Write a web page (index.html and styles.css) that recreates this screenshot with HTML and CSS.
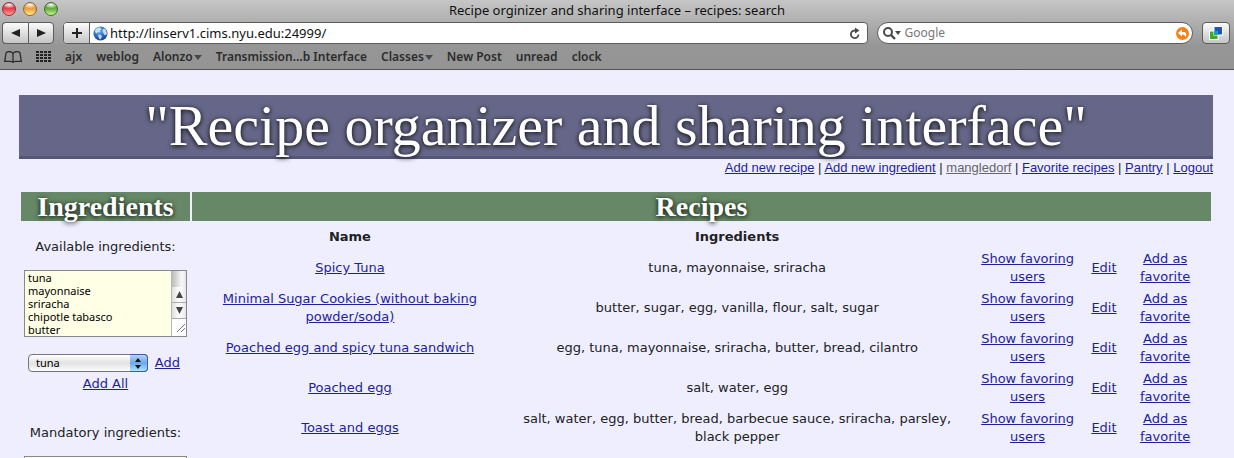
FILE: index.html
```html
<!DOCTYPE html>
<html lang="en">
<head>
<meta charset="utf-8">
<title>Recipe orginizer and sharing interface – recipes: search</title>
<link rel="stylesheet" href="styles.css">
</head>
<body>
<div class="browser">
  <header class="chrome">
    <div class="titlebar">
      <div class="lights">
        <button class="light light-close" type="button" aria-label="Close"></button>
        <button class="light light-min" type="button" aria-label="Minimize"></button>
        <button class="light light-zoom" type="button" aria-label="Zoom"></button>
      </div>
      <div class="window-title">Recipe orginizer and sharing interface – recipes: search</div>
    </div>
    <div class="toolbar">
      <div class="history">
        <button class="tool" type="button" aria-label="Back"><svg width="10" height="8" viewBox="0 0 10 8"><path d="M9 0v8L0 4z" fill="#222"/></svg></button>
        <button class="tool" type="button" aria-label="Forward"><svg width="10" height="8" viewBox="0 0 10 8"><path d="M1 0v8l9-4z" fill="#222"/></svg></button>
      </div>
      <div class="address">
        <button class="tool tool-add" type="button" aria-label="Add bookmark"><svg width="12" height="12" viewBox="0 0 12 12"><path d="M6 1v10M1 6h10" stroke="#222" stroke-width="2"/></svg></button>
        <svg class="globe" width="15" height="15" viewBox="0 0 15 15">
          <defs><radialGradient id="globe" cx=".4" cy=".3" r=".7"><stop offset="0" stop-color="#7db8ee"/><stop offset=".6" stop-color="#2a6dbd"/><stop offset="1" stop-color="#17418a"/></radialGradient></defs>
          <circle cx="7.5" cy="7.5" r="7" fill="url(#globe)"/>
          <path d="M2 4.5C3 2 5.500 1 7 1.500L8.500 3 7 4.500 6.500 6.500 5 6 3.500 7.500 2 6zM5 8.500l3 .5 1 1.500-1.500 3L6 12.500zM10 3l2-.5 1.500 3L14 8l-2 1.500-1.500-2L9.500 5z" fill="#d9ecf8" opacity=".85"/>
        </svg>
        <input class="url" type="text" value="http://linserv1.cims.nyu.edu:24999/" aria-label="Address">
        <button class="plain reload" type="button" aria-label="Reload"><svg width="12" height="13" viewBox="0 0 12 13"><path d="M7 3.500H5.500a3.800 3.800 0 1 0 4 4" fill="none" stroke="#4a4a4a" stroke-width="1.800"/><path d="M6 .5l4.500 3-4.500 3z" fill="#4a4a4a"/></svg></button>
      </div>
      <div class="search">
        <svg width="18" height="13" viewBox="0 0 18 13"><circle cx="5" cy="5" r="4" fill="none" stroke="#4a4a4a" stroke-width="2"/><path d="M8 8l4 4" stroke="#4a4a4a" stroke-width="2.400"/><path d="M12 4h6l-3 4z" fill="#4a4a4a"/></svg>
        <input class="query" type="text" placeholder="Google" aria-label="Search">
        <button class="plain" type="button" aria-label="SnapBack"><svg width="13" height="13" viewBox="0 0 13 13"><circle cx="6.500" cy="6.500" r="6.500" fill="#f98015"/><path d="M2 6l4-3.500V5h1.500C10 5 11 7 9.500 10.500 9.500 8.500 8.500 7.500 6 7.500V9.500z" fill="#fff"/></svg></button>
      </div>
      <button class="tool tool-extra" type="button" aria-label="Window sync"><svg width="14" height="14" viewBox="0 0 14 14"><rect x=".5" y="5" width="8.500" height="8.500" fill="#3faa28" stroke="#fff"/><rect x="5" y=".5" width="8.500" height="8.500" fill="#1f55b5" stroke="#fff"/><rect x="5" y="5" width="4" height="4" fill="#19a3b0"/></svg></button>
    </div>
    <nav class="bookmarks" aria-label="Bookmarks">
      <button class="plain" type="button" aria-label="Show all bookmarks"><svg width="18" height="12" viewBox="0 0 18 12"><path d="M9 10.500V2.500C7.500 0 3.500 0 2 2L.7 10.300H6.500C8 10.300 8.500 10.700 9 11.500c.5-.8 1-1.200 2.500-1.200h5.800L16 2C14.500 0 10.500 0 9 2.500" fill="none" stroke="#2b2b2b" stroke-width="1.300"/></svg></button>
      <button class="plain" type="button" aria-label="Top sites"><svg width="15" height="11" viewBox="0 0 15 11"><path d="M0 1h15M0 4h15M0 7h15M0 10h15" stroke="#222" stroke-width="2" stroke-dasharray="3 1"/></svg></button>
      <a href="#">ajx</a>
      <a href="#">weblog</a>
      <a href="#">Alonzo<span class="caret"></span></a>
      <a href="#">Transmission…b Interface</a>
      <a href="#">Classes<span class="caret"></span></a>
      <a href="#">New Post</a>
      <a href="#">unread</a>
      <a href="#">clock</a>
    </nav>
  </header>

  <div class="page">
    <h1 class="banner">"Recipe organizer and sharing interface"</h1>
    <nav class="site-links" aria-label="Site">
      <a href="#">Add new recipe</a> | <a href="#">Add new ingredient</a> | <a class="user" href="#">mangledorf</a> | <a href="#">Favorite recipes</a> | <a href="#">Pantry</a> | <a href="#">Logout</a>
    </nav>

    <div class="columns">
      <aside class="filters">
        <h2 class="section-title">Ingredients</h2>
        <div class="filter">
          <label for="available">Available ingredients:</label>
          <div class="listbox">
            <textarea id="available" rows="5">tuna
mayonnaise
sriracha
chipotle tabasco
butter</textarea>
            <div class="scrollbar" aria-hidden="true">
              <span class="track"></span>
              <span class="step"><svg width="7" height="7" viewBox="0 0 7 7"><path d="M0 7h7L3.500 0z" fill="#444"/></svg></span>
              <span class="step"><svg width="7" height="7" viewBox="0 0 7 7"><path d="M0 0h7L3.500 7z" fill="#444"/></svg></span>
              <span class="grip"><svg width="9" height="9" viewBox="0 0 9 9"><path d="M1 9l8-8M5 9l4-4" stroke="#777"/></svg></span>
            </div>
          </div>
          <div class="picker">
            <span class="popup">
              <select aria-label="Ingredient"><option>tuna</option></select>
              <span class="popup-arrows" aria-hidden="true"><svg width="6" height="11" viewBox="0 0 6 11"><path d="M0 4h6L3 0zM0 7h6l-3 4z" fill="#111"/></svg></span>
            </span>
            <a href="#">Add</a>
          </div>
          <a href="#">Add All</a>
        </div>
        <div class="filter">
          <label for="mandatory">Mandatory ingredients:</label>
          <div class="listbox"><textarea id="mandatory" rows="5"></textarea></div>
        </div>
      </aside>

      <main class="recipes">
        <h2 class="section-title">Recipes</h2>
        <table class="recipe-table">
          <colgroup><col class="col-name"><col class="col-ingredients"><col class="col-users"><col class="col-edit"><col class="col-favorite"></colgroup>
          <thead>
            <tr><th>Name</th><th>Ingredients</th><td></td><td></td><td></td></tr>
          </thead>
          <tbody>
            <tr><td><a href="#">Spicy Tuna</a></td><td>tuna, mayonnaise, sriracha</td><td><a href="#">Show favoring users</a></td><td><a href="#">Edit</a></td><td><a href="#">Add as favorite</a></td></tr>
            <tr><td><a href="#">Minimal Sugar Cookies (without baking powder/soda)</a></td><td>butter, sugar, egg, vanilla, flour, salt, sugar</td><td><a href="#">Show favoring users</a></td><td><a href="#">Edit</a></td><td><a href="#">Add as favorite</a></td></tr>
            <tr><td><a href="#">Poached egg and spicy tuna sandwich</a></td><td>egg, tuna, mayonnaise, sriracha, butter, bread, cilantro</td><td><a href="#">Show favoring users</a></td><td><a href="#">Edit</a></td><td><a href="#">Add as favorite</a></td></tr>
            <tr><td><a href="#">Poached egg</a></td><td>salt, water, egg</td><td><a href="#">Show favoring users</a></td><td><a href="#">Edit</a></td><td><a href="#">Add as favorite</a></td></tr>
            <tr><td><a href="#">Toast and eggs</a></td><td>salt, water, egg, butter, bread, barbecue sauce, sriracha, parsley, black pepper</td><td><a href="#">Show favoring users</a></td><td><a href="#">Edit</a></td><td><a href="#">Add as favorite</a></td></tr>
          </tbody>
        </table>
      </main>
    </div>
  </div>
</div>
</body>
</html>
```

FILE: styles.css
```css
* { box-sizing: border-box; }

body {
  margin: 0;
  background: #eeeeff;
  color: #222;
  font: 13px/18px "DejaVu Sans", Verdana, sans-serif;
}

button, input, select, textarea { margin: 0; font: inherit; color: inherit; }
svg { display: block; flex: none; }

.browser {
  display: flex;
  flex-direction: column;
  height: 100vh;
}

/* Window chrome */
.chrome {
  flex: none;
  border-bottom: 1px solid #515151;
  background: linear-gradient(#c6c6c6, #969696 46px, #949494);
  color: #111;
  font: 13px/18px "Noto Sans", "Lucida Grande", sans-serif;
}

.titlebar {
  display: grid;
  grid-template-columns: 1fr auto 1fr;
  align-items: center;
  height: 20px;
}

.lights { display: flex; gap: 7px; padding: 0 0 2px 2px; }

.light {
  width: 14px;
  height: 14px;
  padding: 0;
  border: 1px solid #4a4a4a;
  border-radius: 50%;
}
.light-close { border-color: #8a3030; background: radial-gradient(ellipse 60% 30% at 50% 15%, #fff, transparent), linear-gradient(#c8303a, #e8424a 50%, #ffa0a0); }
.light-min { border-color: #966428; background: radial-gradient(ellipse 60% 30% at 50% 15%, #fff, transparent), linear-gradient(#d88a30, #f0a040 50%, #ffee90); }
.light-zoom { border-color: #3c7028; background: radial-gradient(ellipse 60% 30% at 50% 15%, #fff, transparent), linear-gradient(#4a9030, #68b040 50%, #c8f490); }

.toolbar {
  display: flex;
  align-items: center;
  gap: 9px;
  padding: 2px 4px 2px 2px;
}

.history { display: flex; }

.tool {
  display: flex;
  align-items: center;
  justify-content: center;
  width: 26px;
  height: 22px;
  padding: 0;
  border: 1px solid #5c5c5c;
  border-radius: 4px;
  background: linear-gradient(#fbfbfb, #c4c4c4);
}
.history .tool:first-child { border-right: 0; border-radius: 4px 0 0 4px; }
.history .tool:last-child { border-radius: 0 4px 4px 0; }

.address, .search {
  display: flex;
  align-items: center;
  height: 22px;
  min-width: 0;
  border: 1px solid #5c5c5c;
  background: #fff;
}
.address { flex: 13 1 0; padding-right: 6px; border-radius: 4px; }
.search { flex: 5 1 0; gap: 4px; padding: 0 3px 0 5px; border-radius: 11px; font-size: 12px; }

.address .tool-add {
  height: 20px;
  border-width: 0 1px 0 0;
  border-radius: 3px 0 0 3px;
}
.globe { margin: 0 2px 0 3px; }
.url, .query {
  flex: 1;
  min-width: 0;
  height: 18px;
  padding: 0;
  border: 0;
  outline: 0;
  background: none;
}
.query::placeholder { color: #777; opacity: 1; }
.toolbar .tool-extra { width: 28px; }

.plain { padding: 0; border: 0; background: none; }

.bookmarks {
  display: flex;
  align-items: center;
  gap: 14px;
  height: 23px;
  padding: 0 4px 2px;
  font-size: 12px;
  font-weight: 600;
}
.bookmarks a { color: #2c2c2c; text-decoration: none; white-space: nowrap; }
.caret {
  display: inline-block;
  margin-left: 1px;
  border: 4px solid transparent;
  border-top: 5px solid #484848;
  border-bottom: 0;
  vertical-align: middle;
}

/* Page */
.page {
  flex: 1;
  min-height: 0;
  overflow: hidden;
  padding: 25px 21px 0 19px;
}
.page a { color: #1f1f99; }

.banner {
  margin: 0;
  border-bottom: 3px solid #555577;
  background: #666688;
  color: #fff;
  font: 400 58px/61px "Liberation Serif", Georgia, serif;
  text-align: center;
  text-shadow: 0 1px 5px #000;
}

.site-links {
  font: 13px/18px "Liberation Sans", Helvetica, sans-serif;
  text-align: right;
}
.site-links .user { color: #666; }

.columns {
  display: grid;
  grid-template-columns: 169px 1fr;
  gap: 2px;
  padding: 15px 2px 0;
}

.section-title {
  margin: 0;
  background: #668866;
  color: #fff;
  font: 700 28px/29px "Liberation Serif", Georgia, serif;
  text-align: center;
  text-shadow: 0 1px 5px #000;
}

.filter {
  padding: 17px 3px 14px;
  text-align: center;
}
.filter label { display: block; margin-bottom: 14px; }

.listbox {
  display: flex;
  height: 67px;
  border: 1px solid #888;
  background: #ffffe6;
}
.listbox textarea {
  flex: 1;
  min-width: 0;
  padding: 0 3px;
  border: 0;
  outline: 0;
  overflow: hidden;
  resize: none;
  background: none;
  color: #000;
  font: 11px/13px "Noto Sans", "Lucida Grande", sans-serif;
}

.scrollbar {
  display: flex;
  flex-direction: column;
  width: 15px;
  border-left: 1px solid #bbb;
  background: #fff;
}
.track { height: 17px; background: linear-gradient(90deg, #bbb, #f8f8f8 70%, #e4e4e4); }
.step {
  display: flex;
  align-items: center;
  justify-content: center;
  height: 17px;
  border-bottom: 1px solid #aaa;
  background: linear-gradient(90deg, #ddd, #fff 50%, #e8e8e8);
}
.grip { display: flex; justify-content: flex-end; padding: 4px 1px; }

.picker {
  display: flex;
  align-items: center;
  gap: 7px;
  padding: 17px 7px 3px 4px;
}
.popup { position: relative; flex: 1; height: 18px; }
.popup select {
  display: block;
  width: 100%;
  height: 18px;
  padding: 0 20px 0 7px;
  appearance: none;
  border: 1px solid #777;
  border-radius: 4px;
  background: linear-gradient(#fff, #e2e2e2 50%, #fafafa);
  color: #000;
  font: 11px/16px "Noto Sans", "Lucida Grande", sans-serif;
}
.popup-arrows {
  position: absolute;
  top: 0;
  right: 0;
  display: flex;
  align-items: center;
  justify-content: center;
  width: 18px;
  height: 18px;
  border: 1px solid #3b5f9c;
  border-left: 0;
  border-radius: 0 4px 4px 0;
  background: linear-gradient(#b8d4f4, #69a9ea 50%, #aee2ff);
  pointer-events: none;
}

.recipe-table {
  width: 100%;
  table-layout: fixed;
  border-spacing: 0 2px;
  padding-top: 4px;
}
.recipe-table th, .recipe-table td { padding: 1px; text-align: center; }
.col-name { width: 31%; }
.col-ingredients { width: 45%; }
.col-users { width: 12%; }
.col-edit { width: 3%; }
.col-favorite { width: 9%; }
```
